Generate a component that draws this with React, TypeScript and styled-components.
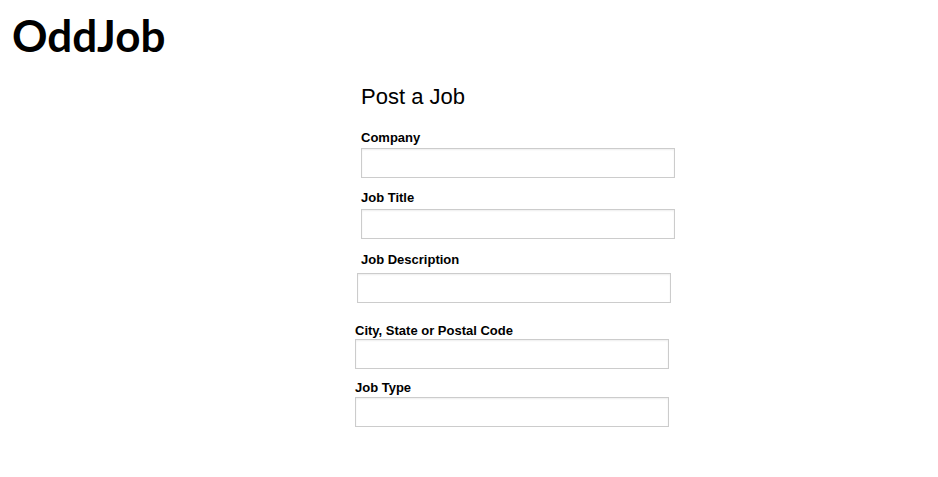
import React from 'react';
import styled, { createGlobalStyle } from 'styled-components';

const GlobalStyle = createGlobalStyle`
  html, body {
    margin: 0;
    padding: 0;
    background: #fff;
  }
  body {
    font-family: "Liberation Sans", Arial, sans-serif;
    color: #000;
  }
`;

const Page = styled.div`
  width: 938px;
  min-height: 477px;
`;

const Brand = styled.h1`
  margin: 0;
  padding: 9px 0 0 12px;
  font-family: Lato, "Open Sans", "Liberation Sans", sans-serif;
  font-weight: 700;
  font-size: 44px;
  line-height: 52px;
`;

const FormColumn = styled.form`
  display: flex;
  flex-direction: column;
  margin: 23px 0 0 355px;
`;

const Heading = styled.h2`
  margin: 0 0 0 6px;
  font-weight: 400;
  font-size: 22px;
  line-height: 26px;
`;

const Field = styled.div<{ $top: number; $gap: number }>`
  display: flex;
  flex-direction: column;
  align-items: flex-start;
  gap: ${(p) => p.$gap}px;
  margin-top: ${(p) => p.$top}px;
`;

const Label = styled.label<{ $indent: number }>`
  margin-left: ${(p) => p.$indent}px;
  font-weight: 700;
  font-size: 13px;
  line-height: 16px;
  color: #000;
`;

const Input = styled.input<{ $indent: number }>`
  box-sizing: border-box;
  width: 314px;
  height: 30px;
  margin: 0 0 0 ${(p) => p.$indent}px;
  padding: 4px 6px;
  border: 1px solid #cccccc;
  border-radius: 0;
  box-shadow: inset 0 1px 2px rgba(0, 0, 0, 0.07);
  background: #fff;
  font-family: "Liberation Sans", Arial, sans-serif;
  font-size: 13px;
  outline: none;
`;

const fields = [
  { id: 'company', label: 'Company', top: 20, gap: 2, labelX: 6, inputX: 6 },
  { id: 'title', label: 'Job Title', top: 12, gap: 3, labelX: 6, inputX: 6 },
  { id: 'description', label: 'Job Description', top: 13, gap: 5, labelX: 6, inputX: 2 },
  { id: 'location', label: 'City, State or Postal Code', top: 20, gap: 0, labelX: 0, inputX: 0 },
  { id: 'type', label: 'Job Type', top: 11, gap: 1, labelX: 0, inputX: 0 },
];

const App: React.FC = () => (
  <Page>
    <GlobalStyle />
    <Brand>OddJob</Brand>
    <FormColumn onSubmit={(e) => e.preventDefault()}>
      <Heading>Post a Job</Heading>
      {fields.map((f) => (
        <Field key={f.id} $top={f.top} $gap={f.gap}>
          <Label htmlFor={f.id} $indent={f.labelX}>{f.label}</Label>
          <Input id={f.id} type="text" $indent={f.inputX} />
        </Field>
      ))}
    </FormColumn>
  </Page>
);

export default App;
